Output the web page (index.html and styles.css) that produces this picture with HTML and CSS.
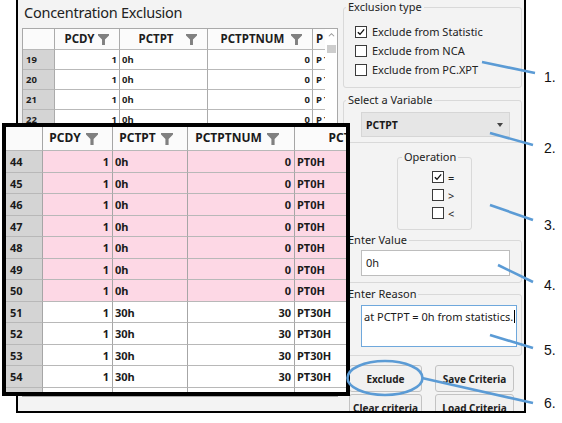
FILE: index.html
```html
<!DOCTYPE html>
<html>
<head>
<meta charset="utf-8">
<link rel="stylesheet" href="styles.css">
</head>
<body>
<svg class="defs" aria-hidden="true">
  <symbol id="funnel" viewBox="0 0 12 12"><path d="M0 0H12V1.6L7.6 6V12H4.4V6L0 1.6Z"/></symbol>
  <symbol id="check" viewBox="0 0 12 12"><path d="M2.2 6.2L4.8 8.8L9.8 2.8" fill="none" stroke="#111" stroke-width="1.6"/></symbol>
</svg>

<div class="window">
  <div class="left">
    <div class="title">Concentration Exclusion</div>
    <div class="grid">
      <div class="grid-cells">
        <div class="g-row g-head">
          <div class="c rh"></div>
          <div class="c w1 hd"><span class="ht">PCDY</span><svg class="fn"><use href="#funnel"/></svg></div>
          <div class="c w2 hd"><span class="ht">PCTPT</span><svg class="fn"><use href="#funnel"/></svg></div>
          <div class="c w3 hd"><span class="ht">PCTPTNUM</span><svg class="fn"><use href="#funnel"/></svg></div>
          <div class="c w4 hd5">PCTPTC</div>
        </div>
        <div class="g-row"><div class="c rh">19</div><div class="c w1 r">1</div><div class="c w2">0h</div><div class="c w3 r">0</div><div class="c w4">PT0H</div></div>
        <div class="g-row"><div class="c rh">20</div><div class="c w1 r">1</div><div class="c w2">0h</div><div class="c w3 r">0</div><div class="c w4">PT0H</div></div>
        <div class="g-row"><div class="c rh">21</div><div class="c w1 r">1</div><div class="c w2">0h</div><div class="c w3 r">0</div><div class="c w4">PT0H</div></div>
        <div class="g-row"><div class="c rh">22</div><div class="c w1 r">1</div><div class="c w2">0h</div><div class="c w3 r">0</div><div class="c w4">PT0H</div></div>
        <div class="g-row"><div class="c rh">23</div><div class="c w1 r">1</div><div class="c w2">0h</div><div class="c w3 r">0</div><div class="c w4">PT0H</div></div>
        <div class="g-row"><div class="c rh">24</div><div class="c w1 r">1</div><div class="c w2">0h</div><div class="c w3 r">0</div><div class="c w4">PT0H</div></div>
      </div>
      <div class="vscroll">
        <svg class="up" viewBox="0 0 8 5"><path d="M1 4.5L4 1.5L7 4.5" fill="none" stroke="#9a9a9a" stroke-width="1.2"/></svg>
        <div class="thumb"></div>
      </div>
    </div>
  </div>

  <div class="panel">
    <fieldset class="grp g-type">
      <legend>Exclusion type</legend>
      <div class="cb-row"><span class="box"><svg><use href="#check"/></svg></span>Exclude from Statistic</div>
      <div class="cb-row"><span class="box"></span>Exclude from NCA</div>
      <div class="cb-row"><span class="box"></span>Exclude from PC.XPT</div>
    </fieldset>

    <fieldset class="grp g-var">
      <legend>Select a Variable</legend>
      <div class="dropdown"><span>PCTPT</span><span class="caret"></span></div>
    </fieldset>

    <fieldset class="grp g-op">
      <legend>Operation</legend>
      <div class="cb-row op"><span class="box"><svg><use href="#check"/></svg></span>=</div>
      <div class="cb-row op"><span class="box"></span>&gt;</div>
      <div class="cb-row op"><span class="box"></span>&lt;</div>
    </fieldset>

    <fieldset class="grp g-val">
      <legend>Enter Value</legend>
      <div class="textbox">0h</div>
    </fieldset>

    <fieldset class="grp g-reason">
      <legend>Enter Reason</legend>
      <div class="textarea">at PCTPT = 0h from statistics.<span class="caret-line"></span></div>
    </fieldset>

    <div class="btn-row">
      <div class="btn b1">Exclude</div>
      <div class="btn b2">Save Criteria</div>
    </div>
    <div class="btn-row second">
      <div class="btn b1">Clear criteria</div>
      <div class="btn b2">Load Criteria</div>
    </div>
  </div>
</div>

<div class="zoombox">
  <div class="z-row z-head">
    <div class="z rh"></div>
    <div class="z z1 hd"><span>PCDY</span><svg class="fn"><use href="#funnel"/></svg></div>
    <div class="z z2 hd"><span>PCTPT</span><svg class="fn"><use href="#funnel"/></svg></div>
    <div class="z z3 hd"><span>PCTPTNUM</span><svg class="fn"><use href="#funnel"/></svg></div>
    <div class="z z4 hd"><span>PCTPTC</span></div>
  </div>
  <div class="z-row pink"><div class="z rh">44</div><div class="z z1 r">1</div><div class="z z2">0h</div><div class="z z3 r">0</div><div class="z z4">PT0H</div></div>
  <div class="z-row pink"><div class="z rh">45</div><div class="z z1 r">1</div><div class="z z2">0h</div><div class="z z3 r">0</div><div class="z z4">PT0H</div></div>
  <div class="z-row pink"><div class="z rh">46</div><div class="z z1 r">1</div><div class="z z2">0h</div><div class="z z3 r">0</div><div class="z z4">PT0H</div></div>
  <div class="z-row pink"><div class="z rh">47</div><div class="z z1 r">1</div><div class="z z2">0h</div><div class="z z3 r">0</div><div class="z z4">PT0H</div></div>
  <div class="z-row pink"><div class="z rh">48</div><div class="z z1 r">1</div><div class="z z2">0h</div><div class="z z3 r">0</div><div class="z z4">PT0H</div></div>
  <div class="z-row pink"><div class="z rh">49</div><div class="z z1 r">1</div><div class="z z2">0h</div><div class="z z3 r">0</div><div class="z z4">PT0H</div></div>
  <div class="z-row pink"><div class="z rh">50</div><div class="z z1 r">1</div><div class="z z2">0h</div><div class="z z3 r">0</div><div class="z z4">PT0H</div></div>
  <div class="z-row"><div class="z rh">51</div><div class="z z1 r">1</div><div class="z z2">30h</div><div class="z z3 r">30</div><div class="z z4">PT30H</div></div>
  <div class="z-row"><div class="z rh">52</div><div class="z z1 r">1</div><div class="z z2">30h</div><div class="z z3 r">30</div><div class="z z4">PT30H</div></div>
  <div class="z-row"><div class="z rh">53</div><div class="z z1 r">1</div><div class="z z2">30h</div><div class="z z3 r">30</div><div class="z z4">PT30H</div></div>
  <div class="z-row"><div class="z rh">54</div><div class="z z1 r">1</div><div class="z z2">30h</div><div class="z z3 r">30</div><div class="z z4">PT30H</div></div>
  <div class="z-row"><div class="z rh">55</div><div class="z z1 r">1</div><div class="z z2">30h</div><div class="z z3 r">30</div><div class="z z4">PT30H</div></div>
</div>

<svg class="annot" viewBox="0 0 562 423">
  <g stroke="#5b9bd5" stroke-width="2.6" fill="none">
    <line x1="482" y1="62" x2="535" y2="73"/>
    <line x1="490" y1="133" x2="533" y2="145"/>
    <line x1="490" y1="205" x2="533" y2="220"/>
    <line x1="498" y1="265" x2="533" y2="282"/>
    <line x1="490" y1="335" x2="533" y2="348"/>
    <line x1="422" y1="378" x2="533" y2="403"/>
    <ellipse cx="385" cy="378" rx="37.5" ry="17"/>
  </g>
</svg>

<div class="num n1">1.</div>
<div class="num n2">2.</div>
<div class="num n3">3.</div>
<div class="num n4">4.</div>
<div class="num n5">5.</div>
<div class="num n6">6.</div>
</body>
</html>
```

FILE: styles.css
```css
* { box-sizing: border-box; }
html, body { margin: 0; padding: 0; }
body {
  width: 562px;
  height: 423px;
  background: #ffffff;
  position: relative;
  overflow: hidden;
  font-family: "Noto Sans", "Open Sans", sans-serif;
  color: #1e1e1e;
}
.defs { position: absolute; width: 0; height: 0; overflow: hidden; }

/* ---------- window ---------- */
.window {
  margin-left: 16px;
  width: 510px;
  height: 413px;
  border: 2px solid #000;
  border-top: 0;
  background: #f3f3f3;
  display: flex;
}
.left {
  width: 322px;
  flex: none;
  padding-left: 4px;
  display: flex;
  flex-direction: column;
}
.title {
  height: 28px;
  line-height: 25px;
  font-size: 14.5px;
  letter-spacing: -0.25px;
  padding-left: 2px;
  color: #222;
  white-space: nowrap;
}
.grid {
  width: 316px;
  height: 369px;
  border: 1px solid #a9a9a9;
  background: #fff;
  display: flex;
  overflow: hidden;
}
.grid-cells { width: 302px; flex: none; overflow: hidden; }
.g-row { display: flex; height: 20px; }
.g-row.g-head { height: 21px; }
.c {
  flex: none;
  border-right: 1px solid #ababab;
  border-bottom: 1px solid #b9b9b9;
  font-size: 9.5px;
  font-weight: 700;
  line-height: 19px;
  padding: 0 2px;
  white-space: nowrap;
  overflow: hidden;
}
.c.rh { width: 32px; background: #d4d4d4; padding-left: 3px; }
.c.w1 { width: 65px; }
.c.w2 { width: 88px; }
.c.w3 { width: 105px; }
.c.w4 { width: 60px; padding-left: 3px; letter-spacing: 2px; }
.c.r { text-align: right; }
.g-head .c { background: #fbfbfb; line-height: 20px; }
.g-head .c.rh { background: #fbfbfb; }
.hd { display: flex; align-items: center; font-size: 11.5px; }
.hd .ht { flex: 1; text-align: center; padding-left: 4px; }
.hd .fn { width: 11px; height: 11px; fill: #808080; margin-right: 8px; flex: none; }
.hd5 { font-size: 11.5px; }
.vscroll {
  width: 12px;
  flex: none;
  background: #fff;
  display: flex;
  flex-direction: column;
  align-items: center;
}
.vscroll .up { width: 7px; height: 5px; margin-top: 3px; }
.vscroll .thumb { width: 9px; height: 8px; margin-top: 8px; background: #cdcdcd; }

/* ---------- right panel ---------- */
.panel {
  width: 184px;
  flex: none;
  padding: 0 2px 0 3px;
  overflow: hidden;
}
.grp {
  margin: 0;
  padding: 0;
  border: 1px solid #d9d9d9;
  border-radius: 3px;
  min-width: 0;
  width: 179px;
}
.grp legend {
  padding: 0 2px;
  margin-left: 2px;
  font-size: 11px;
  line-height: 14px;
  color: #222;
}
.g-type { padding: 8px 0 8px 0; }
.g-type .cb-row { margin-left: 11px; }
.cb-row {
  display: flex;
  align-items: center;
  height: 19px;
  font-size: 11px;
  color: #222;
  white-space: nowrap;
}
.box {
  width: 12px;
  height: 12px;
  border: 1px solid #3a3a3a;
  background: #fff;
  margin-right: 5px;
  flex: none;
  display: flex;
}
.box svg { width: 10px; height: 10px; }

.g-var { margin-top: 5px; padding: 5px 0 5px 0; }
.dropdown {
  margin-left: 17px;
  width: 149px;
  height: 25px;
  background: #e6e6e6;
  border: 1px solid #d6d6d6;
  display: flex;
  align-items: center;
  justify-content: space-between;
  padding: 0 6px 0 4px;
  font-size: 10.5px;
  font-weight: 700;
  color: #1a1a1a;
}
.caret {
  width: 0;
  height: 0;
  border-left: 3.5px solid transparent;
  border-right: 3.5px solid transparent;
  border-top: 4px solid #444;
}

.g-op {
  width: 75px;
  margin: 7px 0 0 54px;
  padding: 4px 0 7px 0;
}
.g-op legend { margin-left: 4px; }
.cb-row.op { height: 18px; margin-left: 34px; }
.cb-row.op .box { margin-right: 4px; }

.g-val { margin-top: 3px; padding: 3px 0 6px 0; }
.textbox {
  margin-left: 17px;
  width: 149px;
  height: 26px;
  background: #fff;
  border: 1px solid #bdbdbd;
  font-size: 11px;
  line-height: 24px;
  padding-left: 4px;
  color: #1a1a1a;
}
.g-reason { margin-top: 4px; padding: 4px 0 8px 0; }
.textarea {
  margin-left: 17px;
  width: 156px;
  height: 42px;
  background: #fff;
  border: 1px solid #6fa8dc;
  font-size: 11px;
  line-height: 16px;
  padding: 3px 0 0 2px;
  white-space: nowrap;
  overflow: hidden;
  color: #1a1a1a;
}
.caret-line {
  display: inline-block;
  width: 1px;
  height: 13px;
  background: #000;
  vertical-align: -2px;
  margin-left: 1px;
}

.btn-row {
  display: flex;
  gap: 13px;
  margin-top: 9px;
  padding-left: 6px;
}
.btn-row.second { margin-top: 2px; }
.btn {
  height: 27px;
  background: #f1f1f1;
  border: 1px solid #c3c3c3;
  border-radius: 3px;
  font-size: 10px;
  font-weight: 700;
  color: #222;
  display: flex;
  align-items: center;
  justify-content: center;
  white-space: nowrap;
}
.btn.b1 { width: 73px; }
.btn.b2 { width: 79px; }

/* ---------- zoomed overlay grid ---------- */
.zoombox {
  position: absolute;
  left: 2px;
  top: 123px;
  width: 348px;
  height: 273px;
  border: 4px solid #000;
  background: #fff;
  overflow: hidden;
}
.z-row { display: flex; height: 21.5px; }
.z-row.z-head { height: 24px; }
.z {
  flex: none;
  border-right: 1px solid #a6a6a6;
  border-bottom: 1px solid #b8b8b8;
  font-size: 11px;
  font-weight: 700;
  line-height: 20.5px;
  padding: 1px 2px 0;
  white-space: nowrap;
  overflow: hidden;
  color: #1a1a1a;
}
.z.rh { width: 37px; background: #d4d4d4; padding-left: 4px; }
.z.z1 { width: 70px; }
.z.z2 { width: 75px; }
.z.z3 { width: 107px; }
.z.z4 { width: 112px; }
.z.r { text-align: right; padding-right: 3px; }
.pink .z:not(.rh) { background: #fdd8e5; }
.z-head .z { background: #fbfbfb; font-size: 12px; padding: 0; }
.z-head .z.rh { background: #fafafa; }
.z.hd { display: flex; align-items: center; justify-content: center; gap: 5px; }
.z.hd .fn { width: 12px; height: 12px; fill: #808080; flex: none; }

/* ---------- annotations ---------- */
.annot {
  position: absolute;
  left: 0;
  top: 0;
  width: 562px;
  height: 423px;
  pointer-events: none;
}
.num {
  position: absolute;
  left: 544px;
  font-family: "Liberation Sans", Arial, sans-serif;
  font-size: 14px;
  line-height: 16px;
  color: #111;
}
.n1 { top: 69px; }
.n2 { top: 140px; }
.n3 { top: 217px; }
.n4 { top: 277px; }
.n5 { top: 342px; }
.n6 { top: 395px; }
```
